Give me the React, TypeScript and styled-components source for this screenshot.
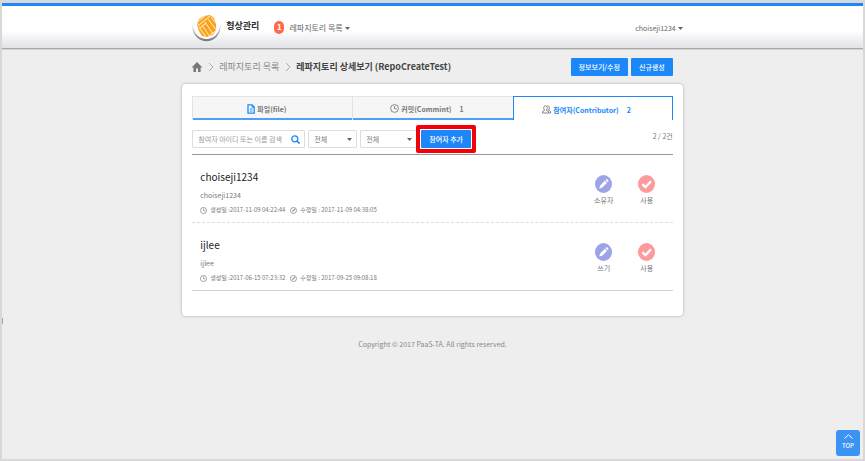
import React from "react";
import styled, { createGlobalStyle, css } from "styled-components";

const blue = "#1b87f8";

const GlobalStyle = createGlobalStyle`
  *, *::before, *::after { box-sizing: border-box; }
  body {
    margin: 0;
    background: #eee;
    color: #777;
    font-family: "Noto Sans CJK KR", "Noto Sans", sans-serif;
    font-size: 8px;
    line-height: 12px;
  }
  button, input, select { font: inherit; color: inherit; margin: 0; }
  button { border: 0; padding: 0; background: none; cursor: pointer; }
  a { color: inherit; text-decoration: none; }
  h1, h2, p, ol, ul { margin: 0; padding: 0; list-style: none; }
  svg { display: block; flex: none; }
`;

const Page = styled.div`
  position: relative;
  min-height: 100vh;
  border: 2px solid #d8d8d8;
  border-top-width: 3px;
`;

const Header = styled.header`
  border-top: 3px solid ${blue};
  border-bottom: 1px solid #a8a8a8;
  background: linear-gradient(#fff 58%, #e2e2e7);
  box-shadow: 0 1px 0 #d4d4d0;
`;

const HeaderInner = styled.div`
  display: flex;
  align-items: center;
  width: 55.8%;
  height: 42px;
  margin: 0 auto;
`;

const Brand = styled.a`
  display: flex;
  align-items: center;
  gap: 5px;
  color: #333;
  font-size: 9px;
  font-weight: 700;
`;

const BrandName = styled.span`
  padding-bottom: 2px;
`;

const Count = styled.span`
  display: grid;
  place-items: center;
  width: 10px;
  height: 13px;
  margin: 0 5px 0 15px;
  border-radius: 5px;
  background: #ff6a48;
  color: #fff;
  font-weight: 700;
`;

const MenuButton = styled.button<{ $end?: boolean }>`
  display: flex;
  align-items: center;
  gap: 2px;
  padding-top: 2px;
  color: #666;
  ${(p) => p.$end && css`margin-left: auto; margin-right: -10px; font-size: 7px;`}
`;

const Content = styled.main`
  width: 55.8%;
  margin: 0 auto;
  padding-top: 9px;
`;

const TitleRow = styled.div`
  display: flex;
  align-items: center;
  justify-content: space-between;
  height: 18px;
`;

const Crumbs = styled.ol`
  display: flex;
  align-items: center;
  gap: 6px;
  font-size: 9px;
  white-space: nowrap;
`;

const Crumb = styled.li<{ $current?: boolean }>`
  display: flex;
  align-items: center;
  gap: 5px;
  color: ${(p) => (p.$current ? "#444" : "#888")};
  font-weight: ${(p) => (p.$current ? 700 : 400)};
`;

const Actions = styled.div`
  display: flex;
  gap: 3px;
`;

const PrimaryButton = styled.button`
  height: 18px;
  padding: 0 8px;
  border-radius: 1px;
  background: ${blue};
  color: #fff;
  font-size: 7px;
  font-weight: 500;
  white-space: nowrap;
`;

const Card = styled.section`
  margin: 8px -10px 0;
  padding: 12px 10px 25px;
  border-radius: 4px;
  background: #fff;
  box-shadow: 0 0 3px rgba(0, 0, 0, 0.3);
`;

const Tabs = styled.div`
  display: grid;
  grid-template-columns: repeat(3, 1fr);
`;

const Tab = styled.button<{ $active?: boolean }>`
  display: flex;
  align-items: center;
  justify-content: center;
  gap: 2px;
  height: 24px;
  padding-right: 12px;
  border: 0 solid #e3e3e3;
  border-width: 1px 0 0 1px;
  background: #f6f6f6;
  box-shadow: inset 0 -2px 0 #4aa0fa;
  color: #777;
  font-size: 7px;
  font-weight: 700;
  white-space: nowrap;
  ${(p) =>
    p.$active &&
    css`
      border: 1px solid ${blue};
      border-bottom: 0;
      padding-top: 2px;
      background: #fff;
      box-shadow: none;
      color: ${blue};
    `}
`;

const TabCount = styled.span`
  margin-left: 6px;
`;

const Filters = styled.form`
  display: flex;
  align-items: flex-start;
  gap: 3px;
  padding: 10px 0 6px;
  border-bottom: 1px solid #999;
`;

const Field = styled.div<{ $size: "search" | "small" | "medium" }>`
  display: flex;
  align-items: center;
  width: ${(p) => ({ search: 113, small: 49, medium: 57 })[p.$size]}px;
  height: 18px;
  padding-right: 4px;
  border: 1px solid #ddd;
  border-radius: 1px;
  background: #fff;
`;

const SearchInput = styled.input`
  flex: 1;
  min-width: 0;
  height: 16px;
  padding: 0 0 0 5px;
  border: 0;
  outline: 0;
  background: none;
  font-size: 7px;
  &::placeholder { color: #999; opacity: 1; }
`;

const Select = styled.select`
  flex: 1;
  min-width: 0;
  height: 16px;
  padding: 0 0 0 5px;
  border: 0;
  outline: 0;
  background: none;
  appearance: none;
  font-size: 7px;
`;

const Highlight = styled.div`
  position: relative;
  display: flex;
  margin-left: 1px;
  &::after {
    content: "";
    position: absolute;
    inset: -5px;
    border: 4px solid #f40009;
    border-radius: 2px;
    pointer-events: none;
  }
`;

const Total = styled.span`
  margin-left: auto;
  font-size: 7px;
`;

const Member = styled.li`
  display: flex;
  height: 68px;
  padding: 15px 16px 0 8px;
  border-bottom: 1px dashed #ddd;
  &:last-child { border-bottom: 1px solid #d4d4d4; }
`;

const Info = styled.div`
  flex: 1;
`;

const Name = styled.h2`
  color: #222;
  font-size: 10px;
  font-weight: 400;
  line-height: 14px;
`;

const Id = styled.p`
  padding-top: 5px;
  font-size: 7px;
`;

const Dates = styled.p`
  display: flex;
  align-items: center;
  gap: 3px;
  padding-top: 3px;
  color: #777;
  font-size: 6px;
  white-space: nowrap;
`;

const DateText = styled.span`
  margin-right: 2px;
`;

const StatusList = styled.div`
  display: flex;
  gap: 23px;
  padding-top: 5px;
`;

const Status = styled.button`
  display: flex;
  flex-direction: column;
  align-items: center;
  gap: 1px;
  width: 20px;
  height: 32px;
  font-size: 7px;
  white-space: nowrap;
`;

const Footer = styled.footer`
  padding-top: 22px;
  color: #888;
  font-size: 7px;
  text-align: center;
`;

const EdgeMark = styled.span`
  position: absolute;
  left: 0;
  top: 315px;
  width: 1px;
  height: 6px;
  background: #8da9c7;
`;

const TopLink = styled.a`
  position: fixed;
  right: 5px;
  bottom: 5px;
  display: flex;
  flex-direction: column;
  align-items: center;
  justify-content: center;
  gap: 1px;
  width: 24px;
  height: 26px;
  border-radius: 3px;
  background: #3b93f3;
  color: #fff;
  font-size: 6px;
  font-weight: 500;
`;

const Logo = () => (
  <svg width="29" height="34" viewBox="0 0 29 34" aria-hidden="true">
    <defs>
      <clipPath id="knot">
        <path d="M7 9 L12 6 L18 5 L22 8 L24 14 L24 20 L21 25 L15 27 L10 26 L7 21 L5 15Z" />
      </clipPath>
      <linearGradient id="rim" x1="0" y1="0" x2="0" y2="1">
        <stop offset="0" stopColor="#d2d2d6" />
        <stop offset="1" stopColor="#77777c" />
      </linearGradient>
    </defs>
    <circle cx="14.5" cy="17" r="13" fill="#fff" />
    <path d="M0.5 14 C-1 37 30 37 28.500 14 C27 34 2 34 0.500 14Z" fill="url(#rim)" />
    <g clipPath="url(#knot)">
      <path d="M0 0H29V34H0Z" fill="#f9a11b" />
      <path
        d="M4 13 L13 6 M5 16.500 L18 6 M8 18 L14 13 M3 17 L9 26 M7 17 L14 27 M10 15 L18 27 M13 12 L21 24 M16 9 L25 21 M19 7 L26 16 M16 27 L25 20"
        stroke="#ffe2a8"
        strokeWidth="1.1"
        fill="none"
      />
    </g>
  </svg>
);

const Caret = () => (
  <svg width="5" height="3" viewBox="0 0 5 3" aria-hidden="true">
    <path d="M0 0H5L2.500 3Z" fill="#666" />
  </svg>
);

const HomeIcon = () => (
  <svg width="10" height="10" viewBox="0 0 10 10" aria-hidden="true">
    <path d="M5 0 L10 5 L9.300 5.800 L8.600 5.200 V10 H6 V6.500 H4 V10 H1.400 V5.200 L0.700 5.800 L0 5Z" fill="#777" />
  </svg>
);

const Chevron = () => (
  <svg width="6" height="10" viewBox="0 0 6 10" aria-hidden="true">
    <path d="M1 1L5 5L1 9" fill="none" stroke="#aaa" strokeWidth="1" />
  </svg>
);

const FileIcon = () => (
  <svg width="8" height="10" viewBox="0 0 8 10" aria-hidden="true">
    <path d="M1 .8H5L7.200 3V9.200H1Z" fill="#fff" stroke={blue} strokeWidth="1.300" />
    <path d="M5 1V3.200H7M2.700 5H5.500M2.700 7H5.500" fill="none" stroke={blue} />
  </svg>
);

const ClockIcon = ({ size }: { size: number }) => (
  <svg width={size} height={size} viewBox="0 0 9 9" fill="none" stroke="#888" aria-hidden="true">
    <circle cx="4.500" cy="4.500" r="3.900" />
    <path d="M4.500 2V4.800H6.700" />
  </svg>
);

const EditedIcon = () => (
  <svg width="7" height="7" viewBox="0 0 9 9" fill="none" stroke="#888" aria-hidden="true">
    <circle cx="4.500" cy="4.500" r="3.900" />
    <path d="M3 6L6.500 2.500" strokeWidth="1.300" />
  </svg>
);

const PeopleIcon = () => (
  <svg width="9" height="9" viewBox="0 0 9 9" fill="none" stroke="#777" strokeWidth=".9" aria-hidden="true">
    <path d="M.5 8V6.500L2.500 5.500C1.300 3.500 1.500 .6 3.500 .6S5.700 3.500 4.500 5.500L6.500 6.500V8Z" />
    <path d="M5.500 .7C7.700 .5 7.700 3.500 6.600 5.200L8.500 6.300V8H7" />
  </svg>
);

const SearchIcon = () => (
  <svg width="9" height="9" viewBox="0 0 9 9" fill="none" stroke={blue} aria-hidden="true">
    <circle cx="3.800" cy="3.800" r="3" strokeWidth="1.300" />
    <path d="M6 6L8.500 8.500" strokeWidth="1.600" />
  </svg>
);

const PencilIcon = () => (
  <svg width="17" height="18" viewBox="0 0 17 18" aria-hidden="true">
    <ellipse cx="8.500" cy="9" rx="8.500" ry="9" fill="#9ea3e8" />
    <path d="M4.300 13.500L5 10.700L9.800 5.800L11.900 7.900L7.100 12.800Z M10.400 5.200L11.400 4.300Q12 4 12.600 4.600L13.300 5.400Q13.700 6 13.300 6.500L12.500 7.300Z" fill="#fff" />
  </svg>
);

const CheckIcon = () => (
  <svg width="17" height="18" viewBox="0 0 17 18" aria-hidden="true">
    <ellipse cx="8.500" cy="9" rx="8.500" ry="9" fill="#fd9a9b" />
    <path d="M4.300 9.200L7.400 12.200L13 6.200" fill="none" stroke="#fff" strokeWidth="2.300" />
  </svg>
);

const members = [
  { name: "choiseji1234", created: "2017-11-09 04:22:44", edited: "2017-11-09 04:38:05", role: "소유자" },
  { name: "ijlee", created: "2017-06-15 07:23:32", edited: "2017-09-25 09:08:18", role: "쓰기" },
];

export default function App() {
  return (
    <Page>
      <GlobalStyle />
      <Header>
        <HeaderInner>
          <Brand href="#">
            <Logo />
            <BrandName>형상관리</BrandName>
          </Brand>
          <Count>1</Count>
          <MenuButton>레파지토리 목록 <Caret /></MenuButton>
          <MenuButton $end>choiseji1234 <Caret /></MenuButton>
        </HeaderInner>
      </Header>
      <Content>
        <TitleRow>
          <Crumbs>
            <Crumb><a href="#" aria-label="홈"><HomeIcon /></a></Crumb>
            <Crumb><Chevron /><a href="#">레파지토리 목록</a></Crumb>
            <Crumb $current><Chevron />레파지토리 상세보기 (RepoCreateTest)</Crumb>
          </Crumbs>
          <Actions>
            <PrimaryButton>정보보기/수정</PrimaryButton>
            <PrimaryButton>신규생성</PrimaryButton>
          </Actions>
        </TitleRow>
        <Card>
          <Tabs role="tablist">
            <Tab role="tab"><FileIcon />파일(file)</Tab>
            <Tab role="tab"><ClockIcon size={9} />커밋(Commint)<TabCount>1</TabCount></Tab>
            <Tab role="tab" aria-selected $active><PeopleIcon />참여자(Contributor)<TabCount>2</TabCount></Tab>
          </Tabs>
          <Filters onSubmit={(e: React.FormEvent) => e.preventDefault()}>
            <Field $size="search">
              <SearchInput aria-label="참여자 검색" placeholder="참여자 아이디 또는 이름 검색" />
              <button aria-label="검색"><SearchIcon /></button>
            </Field>
            <Field $size="small">
              <Select aria-label="권한"><option>전체</option></Select>
              <Caret />
            </Field>
            <Field $size="medium">
              <Select aria-label="상태"><option>전체</option></Select>
              <Caret />
            </Field>
            <Highlight>
              <PrimaryButton type="button">참여자 추가</PrimaryButton>
            </Highlight>
            <Total>2 / 2건</Total>
          </Filters>
          <ul>
            {members.map((m) => (
              <Member key={m.name}>
                <Info>
                  <Name>{m.name}</Name>
                  <Id>{m.name}</Id>
                  <Dates>
                    <ClockIcon size={7} />
                    <DateText>생성일 :{m.created}</DateText>
                    <EditedIcon />
                    <DateText>수정일 : {m.edited}</DateText>
                  </Dates>
                </Info>
                <StatusList>
                  <Status><PencilIcon />{m.role}</Status>
                  <Status><CheckIcon />사용</Status>
                </StatusList>
              </Member>
            ))}
          </ul>
        </Card>
      </Content>
      <Footer>Copyright © 2017 PaaS-TA. All rights reserved.</Footer>
      <EdgeMark />
      <TopLink href="#">
        <svg width="9" height="5" viewBox="0 0 9 5" aria-hidden="true">
          <path d="M.5 4.500L4.500 .8L8.500 4.500" fill="none" stroke="#fff" />
        </svg>
        TOP
      </TopLink>
    </Page>
  );
}
